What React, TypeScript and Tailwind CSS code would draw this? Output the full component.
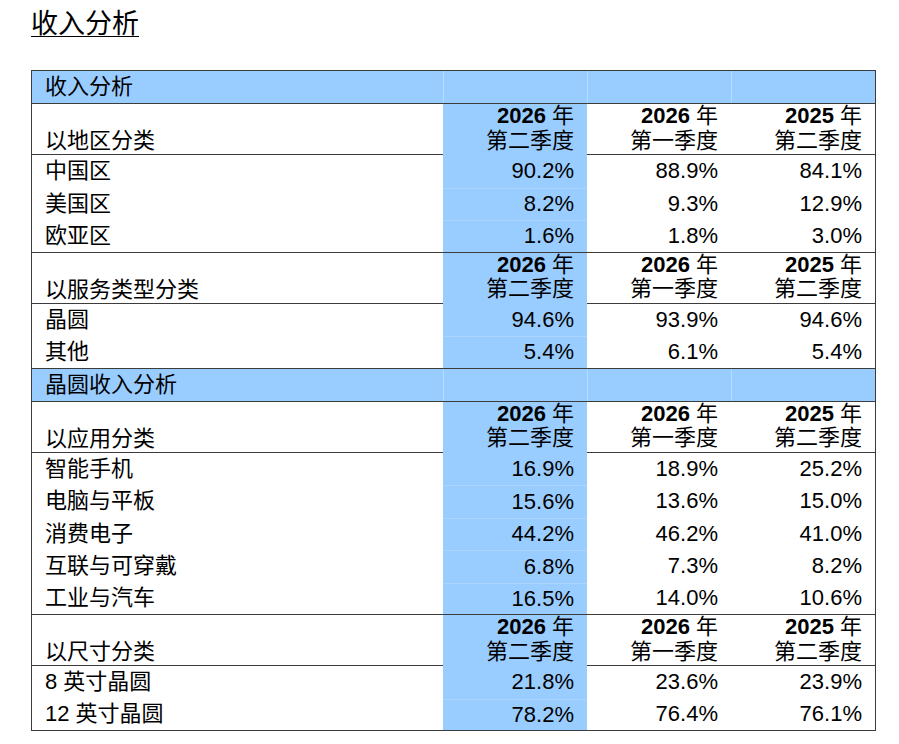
import React from "react";

const COLS = "grid grid-cols-[411px_144px_144px_144px]";

type Group = {
  label: string;
  rows: [string, string, string, string][];
};

const sections: { title: string; groups: Group[] }[] = [
  {
    title: "收入分析",
    groups: [
      {
        label: "以地区分类",
        rows: [
          ["中国区", "90.2%", "88.9%", "84.1%"],
          ["美国区", "8.2%", "9.3%", "12.9%"],
          ["欧亚区", "1.6%", "1.8%", "3.0%"],
        ],
      },
      {
        label: "以服务类型分类",
        rows: [
          ["晶圆", "94.6%", "93.9%", "94.6%"],
          ["其他", "5.4%", "6.1%", "5.4%"],
        ],
      },
    ],
  },
  {
    title: "晶圆收入分析",
    groups: [
      {
        label: "以应用分类",
        rows: [
          ["智能手机", "16.9%", "18.9%", "25.2%"],
          ["电脑与平板", "15.6%", "13.6%", "15.0%"],
          ["消费电子", "44.2%", "46.2%", "41.0%"],
          ["互联与可穿戴", "6.8%", "7.3%", "8.2%"],
          ["工业与汽车", "16.5%", "14.0%", "10.6%"],
        ],
      },
      {
        label: "以尺寸分类",
        rows: [
          ["8 英寸晶圆", "21.8%", "23.6%", "23.9%"],
          ["12 英寸晶圆", "78.2%", "76.4%", "76.1%"],
        ],
      },
    ],
  },
];

const headers: [string, string][] = [
  ["2026", "第二季度"],
  ["2026", "第一季度"],
  ["2025", "第二季度"],
];

function SectionRow({ title }: { title: string }) {
  return (
    <div className={`${COLS} h-[33px] bg-[#99ccff] border-b border-[#3c3c3c]`}>
      <div className="pl-[13px] flex items-center text-[22px] leading-[26px]">{title}</div>
      <div className="border-l border-[#b8dcff]" />
      <div className="border-l border-[#b8dcff]" />
      <div className="border-l border-[#b8dcff]" />
    </div>
  );
}

function HeaderRow({ label }: { label: string }) {
  return (
    <div className={`${COLS} h-[51px] border-b border-[#3c3c3c]`}>
      <div className="pl-[13px] flex items-end pb-[2px] text-[22px] leading-[24px]">{label}</div>
      {headers.map(([y, q], i) => (
        <div
          key={i}
          className={`flex flex-col items-end justify-end pr-[13px] pb-[2px] text-[22px] leading-[24.5px] ${
            i === 0 ? "bg-[#99ccff]" : ""
          }`}
        >
          <div>
            <span className="font-bold">{y}</span> 年
          </div>
          <div>{q}</div>
        </div>
      ))}
    </div>
  );
}

function DataRow({
  row,
  first,
  last,
}: {
  row: [string, string, string, string];
  first: boolean;
  last: boolean;
}) {
  return (
    <div className={`${COLS} h-[32.5px] ${last ? "border-b border-[#3c3c3c]" : ""}`}>
      <div className="pl-[13px] flex items-center text-[22px] leading-[26px]">{row[0]}</div>
      <div
        className={`bg-[#99ccff] flex items-center justify-end pr-[13px] text-[22px] leading-[26px] ${
          first ? "" : "border-t border-[#abd5ff]"
        }`}
      >
        {row[1]}
      </div>
      <div className="flex items-center justify-end pr-[13px] text-[22px] leading-[26px]">{row[2]}</div>
      <div className="flex items-center justify-end pr-[13px] text-[22px] leading-[26px]">{row[3]}</div>
    </div>
  );
}

export default function App() {
  return (
    <div className="w-[899px] h-[744px] bg-white text-black font-['Liberation_Sans','Noto_Sans_CJK_SC',sans-serif] overflow-hidden">
      <div className="pl-[31px] pt-[8px] h-[70px]">
        <span className="text-[27px] leading-[32px] underline decoration-1 underline-offset-[3px]">
          收入分析
        </span>
      </div>
      <div className="ml-[31px] w-[845px] border-x border-t border-[#3c3c3c] box-border">
        {sections.map((s, si) => (
          <div key={si}>
            <SectionRow title={s.title} />
            {s.groups.map((g, gi) => (
              <div key={gi}>
                <HeaderRow label={g.label} />
                {g.rows.map((r, ri) => (
                  <DataRow key={ri} row={r} first={ri === 0} last={ri === g.rows.length - 1} />
                ))}
              </div>
            ))}
          </div>
        ))}
      </div>
    </div>
  );
}
